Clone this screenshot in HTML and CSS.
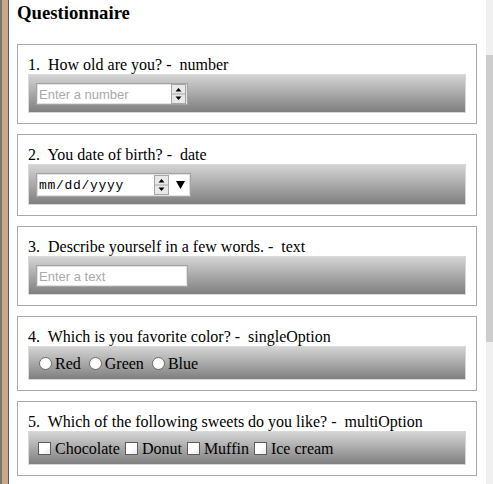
FILE: index.html
```html
<!DOCTYPE html>
<html>
<head>
<meta charset="utf-8">
<title>Questionnaire</title>
<link rel="stylesheet" href="styles.css">
</head>
<body>
<div class="frame">
  <div class="edge"></div>
  <main class="page">
    <h3 class="title">Questionnaire</h3>

    <section class="card">
      <div class="q">1.&nbsp; How old are you? -&nbsp; number</div>
      <div class="bar">
        <div class="field field-num">
          <input class="inp" type="text" placeholder="Enter a number">
          <svg class="spin" width="15" height="20" viewBox="0 0 15 20"><rect x="0.5" y="0.5" width="14" height="19" fill="#e8e8e8" stroke="#a6a6a6"/><line x1="1" y1="10" x2="14" y2="10" stroke="#a6a6a6"/><polygon points="7.5,4 4.5,7.5 10.5,7.5" fill="#000"/><polygon points="4.5,12.5 10.5,12.5 7.5,16" fill="#000"/></svg>
        </div>
      </div>
    </section>

    <section class="card">
      <div class="q">2.&nbsp; You date of birth? -&nbsp; date</div>
      <div class="bar">
        <div class="field field-date">
          <span class="date-text">mm/dd/yyyy</span>
          <svg class="spin" width="15" height="20" viewBox="0 0 15 20"><rect x="0.5" y="0.5" width="14" height="19" fill="#e8e8e8" stroke="#a6a6a6"/><line x1="1" y1="10" x2="14" y2="10" stroke="#a6a6a6"/><polygon points="7.5,4 4.5,7.5 10.5,7.5" fill="#000"/><polygon points="4.5,12.5 10.5,12.5 7.5,16" fill="#000"/></svg>
          <svg class="drop" width="9" height="8" viewBox="0 0 9 8"><polygon points="0,0 9,0 4.5,8" fill="#000"/></svg>
        </div>
      </div>
    </section>

    <section class="card">
      <div class="q">3.&nbsp; Describe yourself in a few words. -&nbsp; text</div>
      <div class="bar">
        <div class="field field-text">
          <input class="inp" type="text" placeholder="Enter a text">
        </div>
      </div>
    </section>

    <section class="card">
      <div class="q">4.&nbsp; Which is you favorite color? -&nbsp; singleOption</div>
      <div class="bar">
        <div class="opts opts-radio">
          <label class="opt"><span class="radio"></span>Red</label>
          <label class="opt"><span class="radio"></span>Green</label>
          <label class="opt"><span class="radio"></span>Blue</label>
        </div>
      </div>
    </section>

    <section class="card">
      <div class="q">5.&nbsp; Which of the following sweets do you like? -&nbsp; multiOption</div>
      <div class="bar">
        <div class="opts opts-check">
          <label class="opt"><span class="check"></span>Chocolate</label>
          <label class="opt"><span class="check"></span>Donut</label>
          <label class="opt"><span class="check"></span>Muffin</label>
          <label class="opt"><span class="check"></span>Ice cream</label>
        </div>
      </div>
    </section>
  </main>
  <div class="scrollbar">
    <div class="track-top"></div>
    <div class="thumb"></div>
    <div class="track-rest"></div>
  </div>
</div>
</body>
</html>
```

FILE: styles.css
```css
html, body {
  margin: 0;
  padding: 0;
  background: #fff;
  height: 484px;
  overflow: hidden;
}

.frame {
  display: flex;
  height: 484px;
}

.edge {
  flex: 0 0 9px;
  background: linear-gradient(to right, #7d746c 0, #7d746c 2px, #c8a88a 2px, #c8a88a 8px, #585858 8px, #585858 9px);
}

.page {
  flex: 1 1 auto;
  min-width: 0;
  padding: 0 9px 0 8px;
  font-family: "Liberation Serif", "Times New Roman", serif;
  color: #000;
}

.title {
  font-size: 18.72px;
  font-weight: bold;
  line-height: 22px;
  margin: 2px 0 20px 0;
}

.card {
  border: 1px solid #a9a9a9;
  padding: 10px;
  margin-bottom: 10px;
}

.q {
  font-size: 16px;
  line-height: 19px;
  white-space: nowrap;
}

.bar {
  display: flex;
  align-items: center;
  background: linear-gradient(#d4d4d4, #7f7f7f);
  border: 1px solid #d9d9d9;
  padding: 8px 7px 7px 7px;
}

.field {
  display: flex;
  align-items: center;
  box-sizing: border-box;
  background: #fff;
  border: 1px solid #a3a3a3;
  box-shadow: inset 0 0 0 1px #e2e2e2;
}

.field-num,
.field-text {
  width: 152px;
  height: 22px;
}

.field-date {
  width: 155px;
  height: 24px;
}

.inp {
  flex: 1 1 auto;
  min-width: 0;
  border: 0;
  outline: 0;
  background: transparent;
  padding: 0 0 0 2px;
  margin: 0;
  font-family: "Liberation Sans", Arial, sans-serif;
  font-size: 13px;
  color: #000;
}

.inp::placeholder {
  color: #a9a9a9;
}

.spin {
  flex: 0 0 auto;
  display: block;
  margin-right: 1px;
}

.date-text {
  flex: 1 1 auto;
  padding-left: 2px;
  font-family: "Liberation Mono", "Courier New", monospace;
  font-size: 13px;
  letter-spacing: 0.7px;
  color: #000;
}

.drop {
  flex: 0 0 auto;
  display: block;
  margin: 0 5px 0 6px;
}

.opts {
  display: flex;
  align-items: center;
  height: 17px;
  font-size: 16px;
  line-height: 17px;
  white-space: nowrap;
}

.opts-radio {
  gap: 5px;
}

.opts-check {
  gap: 3px;
}

.opt {
  display: flex;
  align-items: center;
}

.radio {
  display: block;
  width: 11px;
  height: 11px;
  border: 1px solid #6e6e6e;
  border-radius: 50%;
  background: radial-gradient(circle at 40% 40%, #fff 0, #fff 55%, #e6e6e6 100%);
  margin: 0 3px 0 3px;
}

.check {
  display: block;
  width: 11px;
  height: 11px;
  border: 1px solid #5c5c5c;
  background: linear-gradient(135deg, #fff 0, #fff 50%, #ececec 100%);
  margin: 0 4px 0 2px;
}

.scrollbar {
  flex: 0 0 7px;
  display: flex;
  flex-direction: column;
  background: #f0f0f0;
}

.track-top {
  flex: 0 0 55px;
}

.thumb {
  flex: 0 0 287px;
  background: #cdcdcd;
}

.track-rest {
  flex: 1 1 auto;
}
```
